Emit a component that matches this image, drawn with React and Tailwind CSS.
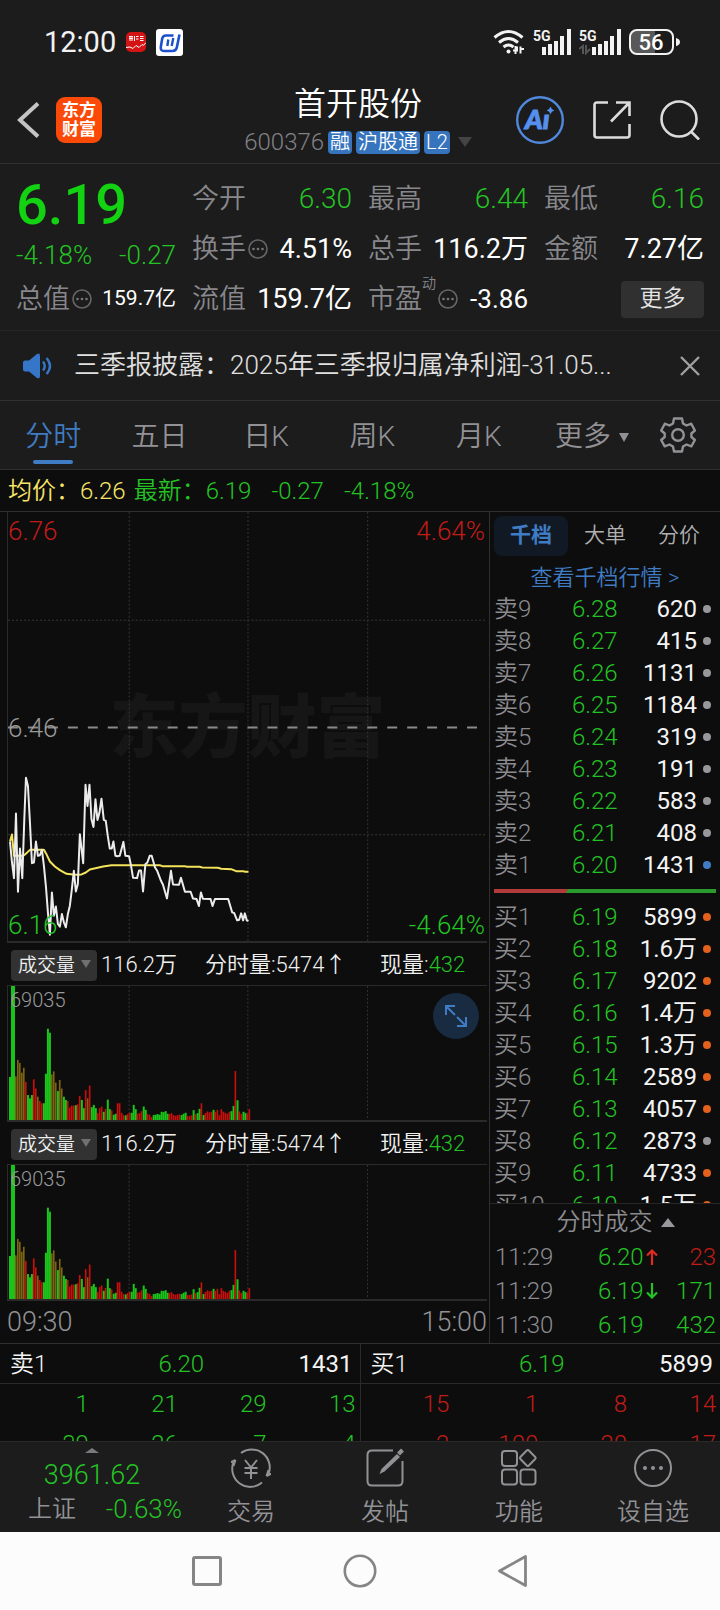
import React, { useState } from 'react';

const GREEN = 'text-[#24c324]';
const RED = 'text-[#c01c18]';

const asks = [
    ['卖9', '6.28', '620', 'gray'],
    ['卖8', '6.27', '415', 'gray'],
    ['卖7', '6.26', '1131', 'gray'],
    ['卖6', '6.25', '1184', 'gray'],
    ['卖5', '6.24', '319', 'gray'],
    ['卖4', '6.23', '191', 'gray'],
    ['卖3', '6.22', '583', 'gray'],
    ['卖2', '6.21', '408', 'gray'],
    ['卖1', '6.20', '1431', 'blue'],
];

const bids = [
    ['买1', '6.19', '5899', 'orange'],
    ['买2', '6.18', '1.6万', 'orange'],
    ['买3', '6.17', '9202', 'orange'],
    ['买4', '6.16', '1.4万', 'orange'],
    ['买5', '6.15', '1.3万', 'orange'],
    ['买6', '6.14', '2589', 'orange'],
    ['买7', '6.13', '4057', 'orange'],
    ['买8', '6.12', '2873', 'gray'],
    ['买9', '6.11', '4733', 'orange'],
    ['买10', '6.10', '1.5万', 'orange'],
];

const dots = {
    gray: 'bg-[#98989c]',
    blue: 'bg-[#3f7cc4]',
    orange: 'bg-[#e3611c]',
};

// one entry per minute: bar height + colour (g up, r down, o mixed)
const volumes = (
    '131g 408g 408g 133o 183o 174o 144o 159o 116r 76g 66g 76g 124r 96r 71o 58r 51r 51g 141g 278g 266g 139o 148o 114o 88g 122o 96o 71g 61g 58r ' +
    '38r 44r 44r 45g 48r 73r 61g 36g 91r 66o 105r 39g 46g 36g 21r 36r 41r 25g 34r 62g 33g 29r 16g 19g 51r 51r 22r 15r 14g 18r ' +
    '22r 22g 46g 33g 19r 21r 27r 41g 31g 18r 16r 9r 15g 16g 18g 16g 25g 24g 27g 19g 18r 21r 15r 13r 15r 16r 15g 19g 22g 12r ' +
    '12r 14r 30g 18r 21g 34g 51r 15g 21r 26r 23r 25r 31g 25r 31r 15r 33r 25r 22r 19r 25r 27g 43g 149r 60g 26r 19r 25g 21g 18r 33r'
).split(' ').map(v => ({ h: parseInt(v, 10), c: v.slice(-1) }));

const volFill = { g: '#1bc41b', r: '#c90f0c', o: '#7d6412' };

const priceLine =
    '30,487 36,550 42,597 48,403 54,638 60,508 67,597 73,420 78,295 84,320 90,430 96,552 102,550 108,487 114,530 120,528 126,512 132,560 138,622 144,700 150,767 156,640 162,710 168,682 174,735 180,743 186,705 192,730 198,745 204,705 210,680 216,630 222,575 228,637 234,615 240,465 250,552 257,316 263,380 269,316 275,420 281,443 287,360 293,422 299,400 305,358 312,422 318,425 324,470 330,508 336,508 341,487 347,530 353,531 360,530 371,488 377,530 388,531 394,560 400,596 412,597 418,574 424,574 430,637 437,555 443,550 450,530 456,530 466,565 472,574 484,605 490,617 502,658 514,575 520,616 538,617 544,596 556,638 573,638 580,658 591,660 598,681 604,640 610,659 633,660 639,681 646,660 686,660 698,700 704,702 713,724 719,722 725,703 731,724 736,703 742,724 747,726';

const avgLine =
    '30,487 36,466 42,530 70,530 76,525 90,512 132,512 138,522 150,547 165,562 180,573 200,584 225,587 245,586 258,580 270,571 310,562 335,558 480,558 488,561 555,561 562,563 600,563 608,565 655,566 665,569 695,570 710,576 730,576 737,578 747,578';

function StatusBar() {
    return (
        <div className="h-19 pt-2 pl-11 pr-10 flex items-center justify-between text-[#f2f2f2]">
            <div className="flex items-center gap-[10px]">
                <span className="text-[29px] leading-8 font-normal">12:00</span>
                <svg width="20" height="20" viewBox="0 0 20 20">
                    <rect width="20" height="20" rx="5" fill="#d41414" />
                    <path d="M3 4.500h4M3 6.500h4M4 4v5M6 4v5M8.500 4v5M10 4.500h2.500M10 7h2.500M14 4.500h3.500M14 6.500h3.500M14 8.500h3.500" stroke="#fff" strokeWidth="1" fill="none" />
                    <path d="M0 15.500l4-.5 3 1.500 3-3 3 2 3-3 1.500 .8L20 10.500" stroke="#fff" strokeWidth="1" fill="none" />
                </svg>
                <svg width="27" height="27" viewBox="0 0 27 27">
                    <rect width="27" height="27" rx="3" fill="#fff" />
                    <path d="M17.500 6.500H10q-3 0-3.800 3L4.800 18q-.5 4 3.200 4h8.500q3.500 0 4.300-3.500L23.500 5.500" stroke="#1c50cc" strokeWidth="2.600" fill="none" />
                    <path d="M12.300 10.500l-1 6.500M17.300 9l-1.600 8" stroke="#1c50cc" strokeWidth="2.400" fill="none" />
                </svg>
            </div>
            <div className="flex items-center gap-2">
                <svg width="32" height="26" viewBox="0 0 32 26" fill="none" stroke="#f2f2f2" strokeWidth="3">
                    <path d="M1.500 8.500q14-12 28 0" />
                    <path d="M6 13.500q9.500-8 19 0" />
                    <path d="M10.500 18q5-4 10 0" />
                    <circle cx="15.500" cy="22.500" r="2" fill="#f2f2f2" stroke="none" />
                    <path d="M20 21.500h4v-4M22.500 17v8M31 20h-4M27.500 17.500v7" strokeWidth="2" />
                </svg>
                <svg width="38" height="26" viewBox="0 0 38 26" fill="#f2f2f2">
                    <text x="0" y="12" fontSize="14" fontWeight="700" fontFamily="Roboto">5G</text>
                    <path d="M9 18h4v8h-4zM15 15h4v11h-4zM21 12h4v14h-4zM27 7h4v19h-4zM34 0h4v26h-4z" />
                </svg>
                <svg width="42" height="26" viewBox="0 0 42 26" fill="#f2f2f2">
                    <text x="0" y="12" fontSize="14" fontWeight="700" fontFamily="Roboto">5G</text>
                    <path d="M0 20l4-3v8M11 20l-4 4v-8" fill="none" stroke="#555" strokeWidth="2" />
                    <path d="M13 18h4v8h-4zM19 15h4v11h-4zM25 12h4v14h-4zM31 7h4v19h-4zM38 0h4v26h-4z" />
                </svg>
                <svg width="51" height="26" viewBox="0 0 51 26">
                    <path d="M8 2h18v22H8q-6 0-6-6V8q0-6 6-6z" fill="#585858" />
                    <rect x="1" y="1" width="43" height="24" rx="7" fill="none" stroke="#f2f2f2" strokeWidth="2" />
                    <path d="M47 9v8q4-1 4-4t-4-4z" fill="#f2f2f2" />
                    <text x="22" y="21" textAnchor="middle" fontSize="22" fontWeight="500" fontFamily="Roboto" fill="#fff">56</text>
                </svg>
            </div>
        </div>
    );
}

function Header() {
    return (
        <header className="h-[88px] grid grid-cols-[1fr_auto_1fr] items-center pl-4 pr-5 border-b border-[#303030]">
            <div className="flex items-center gap-4">
                <button aria-label="返回">
                    <svg width="24" height="40" viewBox="0 0 24 40" fill="none" stroke="#c4c4c4" strokeWidth="4">
                        <path d="M22 3.500L4 20l18 16.500" />
                    </svg>
                </button>
                <a href="#" className="size-[46px] rounded-[9px] bg-[#fb4a08] text-white text-[17px] leading-[19px] font-bold flex flex-col items-center justify-center">
                    <span>东方</span>
                    <span>财富</span>
                </a>
            </div>
            <div className="flex flex-col items-center pt-[5px]">
                <h1 className="text-[32px] leading-10 text-white">首开股份</h1>
                <div className="flex items-center gap-1 h-9 text-[20px] leading-[23px] text-white">
                    <span className="text-[24px] text-[#818185]">600376</span>
                    <span className="bg-[#3674bd] rounded px-[2px]">融</span>
                    <span className="bg-[#3674bd] rounded px-[2px]">沪股通</span>
                    <span className="bg-[#3674bd] rounded px-[2px]">L2</span>
                    <svg width="14" height="10" viewBox="0 0 14 10" className="ml-1"><path d="M0 0h14L7 10z" fill="#444" /></svg>
                </div>
            </div>
            <div className="flex items-center justify-end gap-[29px]">
                <button aria-label="Ai">
                    <svg width="48" height="48" viewBox="0 0 48 48" fill="#5590ee">
                        <circle cx="24" cy="24" r="22.800" fill="none" stroke="#5088dc" strokeWidth="2.400" />
                        <text x="9" y="33" fontSize="27" fontWeight="900" fontStyle="italic" fontFamily="Lato" stroke="#5590ee" strokeWidth="1">Aı</text>
                        <path d="M34.500 10.500q.8 3 3.800 4-3 .8-3.800 3.800-.9-3-3.800-3.800 2.900-1 3.800-4z" />
                    </svg>
                </button>
                <button aria-label="分享">
                    <svg width="38" height="38" viewBox="0 0 38 38" fill="none" stroke="#dcdcdc" strokeWidth="2.600">
                        <path d="M15 1.500H4q-2.500 0-2.500 2.500v30q0 2.500 2.500 2.500h30q2.500 0 2.500-2.500V23" />
                        <path d="M23 1.500h13.500V15M36 2L18 20.500" />
                    </svg>
                </button>
                <button aria-label="搜索">
                    <svg width="40" height="40" viewBox="0 0 40 40" fill="none" stroke="#dcdcdc" strokeWidth="2.600">
                        <circle cx="19" cy="19" r="17.500" />
                        <path d="M31 31.500l8 8" />
                    </svg>
                </button>
            </div>
        </header>
    );
}

function MoreDots() {
    return (
        <svg width="20" height="20" viewBox="0 0 20 20" className="ml-[2px] shrink-0" fill="#77777b">
            <circle cx="10" cy="10" r="9" fill="none" stroke="#66666a" strokeWidth="1.600" />
            <circle cx="5.500" cy="10" r="1.300" />
            <circle cx="10" cy="10" r="1.300" />
            <circle cx="14.500" cy="10" r="1.300" />
        </svg>
    );
}

function Stat({ label, value, dotted, sup, valueClass = 'text-[27px] text-white font-normal' }) {
    return (
        <div className="h-[50px] flex items-center justify-between">
            <span className="flex items-center text-[27px] text-[#88888c] whitespace-nowrap">
                {label}
                {sup && <sup className="text-[14px] -top-4">{sup}</sup>}
                {dotted && <MoreDots />}
            </span>
            <span className={`whitespace-nowrap ${valueClass}`}>{value}</span>
        </div>
    );
}

function Quote() {
    return (
        <section className="grid grid-cols-4 gap-x-4 px-4 pt-[10px] pb-[6px] border-b border-[#262626]">
            <div>
                <div className="h-[62px] text-[56px] leading-[62px] font-medium text-[#12d212]">6.19</div>
                <div className={`h-[38px] flex justify-between items-center text-[26px] ${GREEN}`}>
                    <span>-4.18%</span>
                    <span>-0.27</span>
                </div>
                <Stat label="总值" value="159.7亿" dotted valueClass="text-[21px] text-white font-normal" />
            </div>
            <div>
                <Stat label="今开" value="6.30" valueClass={`text-[28px] ${GREEN}`} />
                <Stat label="换手" value="4.51%" dotted />
                <Stat label="流值" value="159.7亿" />
            </div>
            <div>
                <Stat label="最高" value="6.44" valueClass={`text-[28px] ${GREEN}`} />
                <Stat label="总手" value="116.2万" />
                <Stat label="市盈" value="-3.86" sup="动" dotted valueClass="text-[26px] text-white font-normal" />
            </div>
            <div>
                <Stat label="最低" value="6.16" valueClass={`text-[28px] ${GREEN}`} />
                <Stat label="金额" value="7.27亿" />
                <div className="h-[50px] flex items-center justify-end">
                    <button className="w-[83px] h-[37px] rounded bg-[#303030] text-[#e4e4e4] text-[23px]">更多</button>
                </div>
            </div>
        </section>
    );
}

function Notice() {
    return (
        <div className="h-[70px] flex items-center px-5 border-b border-[#303030]">
            <svg width="32" height="26" viewBox="0 0 32 26" className="shrink-0">
                <path d="M5 7.500h4L17 1q3-1.500 3 2v20q0 3.500-3 2L9 18.500H5q-2 0-2-2v-7q0-2 2-2z" fill="#3576c8" />
                <path d="M23 8.500q3.500 4.500 0 9M26.500 5q7 8 0 16" fill="none" stroke="#3576c8" strokeWidth="2.400" />
            </svg>
            <a href="#" className="flex-1 min-w-0 pl-[22px] text-[26px] text-[#e0e0e0] truncate">三季报披露：2025年三季报归属净利润-31.05...</a>
            <button aria-label="关闭">
                <svg width="20" height="20" viewBox="0 0 20 20" stroke="#a0a0a0" strokeWidth="2.400">
                    <path d="M1 1l18 18M19 1L1 19" />
                </svg>
            </button>
        </div>
    );
}

function PeriodTabs() {
    const [active, setActive] = useState('分时');
    return (
        <nav className="h-[69px] flex items-stretch border-b border-[#303030] text-[28px] text-[#929296]">
            {['分时', '五日', '日K', '周K', '月K'].map(t => (
                <button key={t} onClick={() => setActive(t)} className={`flex-1 relative flex items-center justify-center pt-1 ${active === t ? 'text-[#3f7cc4]' : ''}`}>
                    {t}
                    {active === t && <span className="absolute bottom-[5px] w-10 h-1 rounded-full bg-[#3f7cc4]"></span>}
                </button>
            ))}
            <button className="w-[108px] flex items-center justify-center gap-2 pt-1 pl-3">
                更多
                <svg width="10" height="9" viewBox="0 0 10 9"><path d="M0 0h10L5 9z" fill="#929296" /></svg>
            </button>
            <button aria-label="设置" className="w-[80px] pr-1 flex items-center justify-center">
                <svg width="36" height="36" viewBox="0 0 36 36" fill="none" stroke="#929296" strokeWidth="2.400" strokeLinejoin="round">
                    <path d="M14 1.500h8l1 5 3.500 2 4.800-1.800 3.600 6.800-3.500 3v3.500l3.500 3-3.600 6.300-4.800-1.800-3.500 2-1 5h-8l-1-5-3.500-2-4.800 1.800L1.200 23l3.500-3v-3.500l-3.500-3 3.600-6.800 4.700 1.800 3.500-2z" />
                    <circle cx="18" cy="18" r="5.800" />
                </svg>
            </button>
        </nav>
    );
}

function PriceChart() {
    return (
        <div className="relative h-[431px] border-l border-b-2 border-[#2a2a2a]">
            <div className="absolute inset-0 flex items-center justify-center pt-1 text-[69px] font-black text-[#161616]">东方财富</div>
            <svg className="absolute inset-0 w-full h-full" viewBox="0 0 480 430" preserveAspectRatio="none" fill="none">
                <g stroke="#363636" strokeDasharray="2 2">
                    <path d="M121.500 0V430M240.500 0V430M360.500 0V430M0 108.500H480M0 323.500H480" />
                </g>
                <path d="M0 216H474" stroke="#8a8a8a" strokeWidth="2" strokeDasharray="10 10" />
                <g transform="translate(-8 168) scale(.3333)" strokeWidth="6" strokeLinejoin="round">
                    <polyline points={avgLine} stroke="#f3e45c" />
                    <polyline points={priceLine} stroke="#ececec" />
                </g>
            </svg>
            <div className="absolute inset-0 flex flex-col justify-between pt-[3px] pb-0 text-[26px] leading-8">
                <div className={`flex justify-between pr-[2px] ${RED}`}><span>6.76</span><span>4.64%</span></div>
                <div className="text-[#9a9a9a]">6.46</div>
                <div className={`flex justify-between pr-[2px] ${GREEN}`}><span>6.16</span><span>-4.64%</span></div>
            </div>
        </div>
    );
}

function VolumePanel({ id, expandable }) {
    return (
        <div>
            <div className="h-[42px] flex items-center pl-1 text-[22px] text-[#f0f0f0] whitespace-nowrap">
                <div className="relative mr-1">
                    <select id={id} aria-label="指标" className="appearance-none w-[86px] h-[31px] pl-[7px] rounded bg-[#323232] text-[19px] leading-[31px]">
                        <option>成交量</option>
                    </select>
                    <svg width="10" height="8" viewBox="0 0 10 8" className="absolute right-[6px] top-3 pointer-events-none"><path d="M0 0h10L5 8z" fill="#707070" /></svg>
                </div>
                <span className="w-[104px]">116.2万</span>
                <span className="w-[175px]">分时量:5474↑</span>
                <span>现量:<span className={GREEN}>432</span></span>
            </div>
            <div className="relative h-[137px] border-t border-l border-b-2 border-[#2a2a2a]">
                <svg className="absolute inset-0 w-full h-full" viewBox="0 0 1440 408" preserveAspectRatio="none">
                    <path d="M364 0V408M721 0V408M1081 0V408" stroke="#363636" strokeWidth="3" strokeDasharray="6 6" />
                    {volumes.map((v, i) => (
                        <rect key={i} x={3 + i * 6} y={408 - v.h} width={v.c === 'g' ? 6 : 5} height={v.h} fill={volFill[v.c]} />
                    ))}
                </svg>
                <span className="absolute left-[2px] top-0 text-[20px] leading-7 text-[#9a9a9a]">69035</span>
                {expandable && (
                    <button aria-label="放大" className="absolute right-2 top-[7px] size-[46px] rounded-full bg-[#182b40] flex items-center justify-center">
                        <svg width="24" height="24" viewBox="0 0 24 24" fill="none" stroke="#3f7cc4" strokeWidth="2">
                            <path d="M2 11V2h9M2 2l9 9M22 13v9h-9M22 22l-9-9" />
                        </svg>
                    </button>
                )}
            </div>
        </div>
    );
}

function Ladder({ rows }) {
    return (
        <table className="w-full text-[24px] leading-8">
            <tbody>
                {rows.map(([name, price, vol, dot]) => (
                    <tr key={name} className="h-8">
                        <td className="p-0 w-[78px] text-[#8c8c90]">{name}</td>
                        <td className={`p-0 ${GREEN}`}>{price}</td>
                        <td className="p-0 text-right text-[#f4f4f4] font-normal">{vol}</td>
                        <td className="p-0 w-[19px]"><span className={`block ml-[6px] size-2 rounded-full ${dots[dot]}`}></span></td>
                    </tr>
                ))}
            </tbody>
        </table>
    );
}

function OrderBook() {
    return (
        <aside className="w-[231px] border-l border-[#303030] flex flex-col">
            <div className="px-1 pt-1 flex text-[21px] text-[#b0b0b0]">
                <button className="flex-1 h-10 rounded-lg bg-[#111a24] text-[#3f7cc4] font-bold">千档</button>
                <button className="flex-1 h-10">大单</button>
                <button className="flex-1 h-10">分价</button>
            </div>
            <a href="#" className="h-[37px] pt-1 text-center text-[22px] leading-9 text-[#3f7cc4]">查看千档行情 &gt;</a>
            <div className="h-[610px] overflow-hidden px-1">
                <Ladder rows={asks} />
                <div className="my-2 h-1 flex bg-[#2b9a2e]">
                    <div className="w-1/3 bg-[#b23a3a] [clip-path:polygon(0_0,100%_0,97%_100%,0_100%)]"></div>
                </div>
                <Ladder rows={bids} />
            </div>
            <div className="border-t border-[#262626] pl-[5px] pr-1">
                <button className="w-full h-9 pl-5 flex items-center justify-center gap-2 text-[24px] text-[#8c8c90]">
                    分时成交
                    <svg width="14" height="9" viewBox="0 0 14 9"><path d="M7 0l7 9H0z" fill="#98989c" /></svg>
                </button>
                <table className="w-full text-[24px] leading-[34px]">
                    <tbody>
                        <tr>
                            <td className="p-0 w-[103px] text-[#8c8c90]">11:29</td>
                            <td className={`p-0 ${GREEN}`}><span className="flex items-center gap-[2px]">6.20<Arrow up /></span></td>
                            <td className={`p-0 text-right ${RED}`}>23</td>
                        </tr>
                        <tr>
                            <td className="p-0 text-[#8c8c90]">11:29</td>
                            <td className={`p-0 ${GREEN}`}><span className="flex items-center gap-[2px]">6.19<Arrow /></span></td>
                            <td className={`p-0 text-right ${GREEN}`}>171</td>
                        </tr>
                        <tr>
                            <td className="p-0 text-[#8c8c90]">11:30</td>
                            <td className={`p-0 ${GREEN}`}>6.19</td>
                            <td className={`p-0 text-right ${GREEN}`}>432</td>
                        </tr>
                    </tbody>
                </table>
            </div>
        </aside>
    );
}

function Arrow({ up }) {
    return (
        <svg width="12" height="16" viewBox="0 0 12 16" fill="none" stroke={up ? '#e02a24' : '#24c324'} strokeWidth="2.200">
            <path d={up ? 'M6 16V1.500M1 6.500l5-5 5 5' : 'M6 0v14.500M1 9.500l5 5 5-5'} />
        </svg>
    );
}

function Queue({ name, price, total, rows, color, className }) {
    return (
        <div className={`flex-1 ${className}`}>
            <div className="h-10 grid grid-cols-3 items-center pl-[10px] pr-[7px] text-[24px] text-[#f4f4f4] border-b border-[#2a2a2a]">
                <span>{name}</span>
                <span className={`text-center ${GREEN}`}>{price}</span>
                <span className="text-right font-normal">{total}</span>
            </div>
            <div className={`h-[57px] overflow-hidden pr-1 text-[24px] leading-10 ${color}`}>
                {rows.map((r, i) => (
                    <div key={i} className="grid grid-cols-4 text-right">
                        {r.map((n, j) => <span key={j}>{n}</span>)}
                    </div>
                ))}
            </div>
        </div>
    );
}

function BottomItem({ label, children }) {
    return (
        <button className="flex-1 flex flex-col items-center pt-[6px] text-[24px] text-[#929296]">
            <svg width="40" height="40" viewBox="0 0 40 40" fill="none" stroke="#929296" strokeWidth="2">{children}</svg>
            <span className="leading-9 pt-[6px]">{label}</span>
        </button>
    );
}

function BottomBar() {
    return (
        <footer className="h-[91px] flex bg-[#1c1c1c] border-t border-[#2a2a2a]">
            <div className="w-[184px] flex flex-col items-center pt-[6px]">
                <svg width="14" height="5" viewBox="0 0 14 5"><path d="M7 0l7 5H0z" fill="#7a7a7e" /></svg>
                <span className={`text-[27px] leading-9 pt-1 ${GREEN}`}>3961.62</span>
                <div className="w-full pl-7 flex justify-between items-center text-[24px] leading-8">
                    <span className="text-[#929296]">上证</span>
                    <span className={`text-[26px] pr-[2px] ${GREEN}`}>-0.63%</span>
                </div>
            </div>
            <BottomItem label="交易">
                <path d="M10 5A18 18 0 0 1 37.500 26M31 34.500A18 18 0 0 1 2.600 14M-1 14.500l5.500-2.500M4.500 12l-2 6M41 25.500l-5.500 2.500M35.500 28l2-6" />
                <path d="M14 12l6 7.500 6-7.500M20 19v12M13.500 20h13M13.500 25h13" />
            </BottomItem>
            <BottomItem label="发帖">
                <path d="M28 2.500H7q-4.500 0-4.500 4.500v26q0 4.500 4.500 4.500h26q4.500 0 4.500-4.500V13" />
                <path d="M14.500 26l2-5L32 6l3 3-15.500 14.500z" fill="#929296" stroke="none" />
                <path d="M33.500 6l4-4" strokeWidth="4" />
            </BottomItem>
            <BottomItem label="功能">
                <rect x="3" y="3" width="15" height="15" rx="3" />
                <rect x="3" y="21.500" width="15" height="15" rx="3" />
                <rect x="21.500" y="21.500" width="15" height="15" rx="3" />
                <rect x="22.800" y="4" width="12" height="12" rx="1.500" transform="rotate(45 28.800 10)" />
            </BottomItem>
            <BottomItem label="设自选">
                <circle cx="20" cy="20" r="18" />
                <g fill="#929296" stroke="none">
                    <circle cx="12" cy="20" r="2" />
                    <circle cx="20" cy="20" r="2" />
                    <circle cx="28" cy="20" r="2" />
                </g>
            </BottomItem>
        </footer>
    );
}

function SystemNav() {
    return (
        <div className="h-[78px] bg-[#fcfcfc] flex items-center justify-center gap-[120px]">
            <button aria-label="最近任务">
                <svg width="32" height="32" viewBox="0 0 32 32" fill="none" stroke="#858585" strokeWidth="3"><rect x="2.500" y="2.500" width="27" height="27" rx="1.500" /></svg>
            </button>
            <button aria-label="主页">
                <svg width="34" height="34" viewBox="0 0 34 34" fill="none" stroke="#858585" strokeWidth="2.600"><circle cx="17" cy="17" r="15.200" /></svg>
            </button>
            <button aria-label="后退">
                <svg width="32" height="34" viewBox="0 0 32 34" fill="none" stroke="#858585" strokeWidth="2.800" strokeLinejoin="round"><path d="M28.500 2.500v29L2.500 17z" /></svg>
            </button>
        </div>
    );
}

export default function App() {
    return (
        <div className="bg-[#0d0d0d] font-[Roboto,'Noto_Sans_CJK_SC',sans-serif] font-[350] overflow-hidden">
            <div className="bg-[#1c1c1c]">
                <StatusBar />
                <Header />
                <Quote />
                <Notice />
                <PeriodTabs />
            </div>

            <div className="h-[42px] flex items-center px-2 text-[24px] border-b border-[#303030] whitespace-nowrap">
                <span className="text-[#f7e567] mr-2">均价：6.26</span>
                <span className={`flex gap-5 ${GREEN}`}>
                    <span>最新：6.19</span>
                    <span>-0.27</span>
                    <span>-4.18%</span>
                </span>
            </div>

            <main className="flex border-b border-[#303030]">
                <div className="flex-1 min-w-0 pl-[7px] pr-[2px]">
                    <PriceChart />
                    <VolumePanel id="indicator-1" expandable />
                    <VolumePanel id="indicator-2" />
                    <div className="h-[42px] flex items-center justify-between text-[27px] text-[#929296]">
                        <span>09:30</span>
                        <span>15:00</span>
                    </div>
                </div>
                <OrderBook />
            </main>

            <div className="flex">
                <Queue name="卖1" price="6.20" total="1431" color={GREEN} className="border-r border-[#2a2a2a]" rows={[[1, 21, 29, 13], [39, 26, 7, 4]]} />
                <Queue name="买1" price="6.19" total="5899" color={RED} className="" rows={[[15, 1, 8, 14], [2, 100, 20, 17]]} />
            </div>

            <BottomBar />
            <SystemNav />
        </div>
    );
}
